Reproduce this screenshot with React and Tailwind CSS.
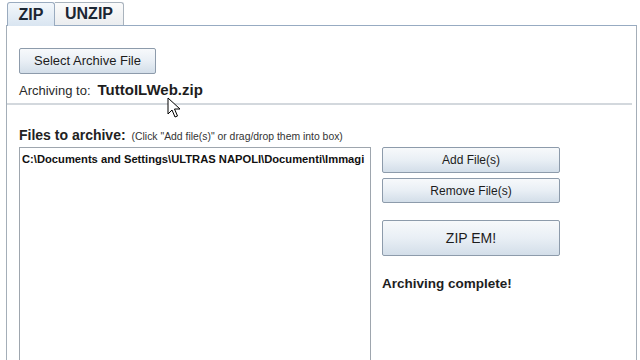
import React from 'react';

const btn =
  'flex items-center justify-center border border-[#8d9bab] rounded-[2px] bg-gradient-to-b from-[#f7f9fb] via-[#e9eff5] to-[#d3dee9] text-[#1c1c1c] text-[12px]';

function Cursor() {
  return (
    <svg className="absolute left-[167px] top-[97px]" width="14" height="22" viewBox="0 0 14 22">
      <path
        d="M1 1 L1 17 L5 13 L8 20 L10.5 19 L7.5 12 L13 12 Z"
        fill="#ffffff"
        stroke="#000000"
        strokeWidth="1"
        strokeLinejoin="round"
      />
    </svg>
  );
}

export default function App() {
  return (
    <div className="relative w-[640px] h-[360px] overflow-hidden bg-white font-['Liberation_Sans',Arial,sans-serif]">
      {/* tabs */}
      <div className="flex items-end pl-[7px] pt-[1px] h-[25px]">
        <div className="relative z-10 w-[48px] h-[24px] -mb-[1px] flex items-center justify-center border border-b-0 border-[#9aabbf] rounded-t-[3px] bg-gradient-to-b from-[#f3f7fb] to-[#d9e5f1] text-[16px] font-bold text-[#1b2633]">
          ZIP
        </div>
        <div className="w-[69px] h-[23px] flex items-center justify-center border border-b-0 border-l-0 border-[#a9b3bd] rounded-tr-[3px] bg-gradient-to-b from-[#fbfbfb] to-[#ebedef] text-[16px] font-bold text-[#1b2633]">
          UNZIP
        </div>
      </div>

      {/* panel */}
      <div className="ml-[6px] w-[631px] h-[400px] border border-[#a4aeb8] border-t-[#97abc2]">
        <div className="pl-[12px] pt-[22px] pb-[6px]">
          <div className={`${btn} w-[137px] h-[26px] text-[13px]`}>Select Archive File</div>
          <div className="flex items-baseline mt-[5px] h-[18px]">
            <span className="text-[13px] text-[#2a2a2a]">Archiving to:</span>
            <span className="ml-[7px] text-[15px] font-bold text-[#1d1d1d]">TuttoILWeb.zip</span>
          </div>
        </div>
        <div className="h-[2px] bg-[#d3d8dd] mr-[4px]" />

        <div className="pl-[12px] pt-[20px]">
          <div className="flex items-baseline h-[18px]">
            <span className="text-[14px] font-bold text-[#222]">Files to archive:</span>
            <span className="ml-[6px] text-[10.4px] text-[#333]">(Click "Add file(s)" or drag/drop them into box)</span>
          </div>
          <div className="flex mt-[4px]">
            <div className="w-[352px] h-[260px] border border-[#9ea6ae] pl-[2px] pt-[3px]">
              <div className="w-full overflow-hidden whitespace-nowrap text-[11.2px] font-bold text-[#111]">
                C:\Documents and Settings\ULTRAS NAPOLI\Documenti\Immagi
              </div>
            </div>
            <div className="ml-[11px] w-[178px] flex flex-col">
              <div className={`${btn} h-[26px]`}>Add File(s)</div>
              <div className={`${btn} h-[25px] mt-[5px]`}>Remove File(s)</div>
              <div className={`${btn} h-[36px] mt-[17px] text-[14px]`}>ZIP EM!</div>
              <div className="mt-[18px] text-[13.5px] font-bold text-[#1e1e1e]">Archiving complete!</div>
            </div>
          </div>
        </div>
      </div>
      <Cursor />
    </div>
  );
}
